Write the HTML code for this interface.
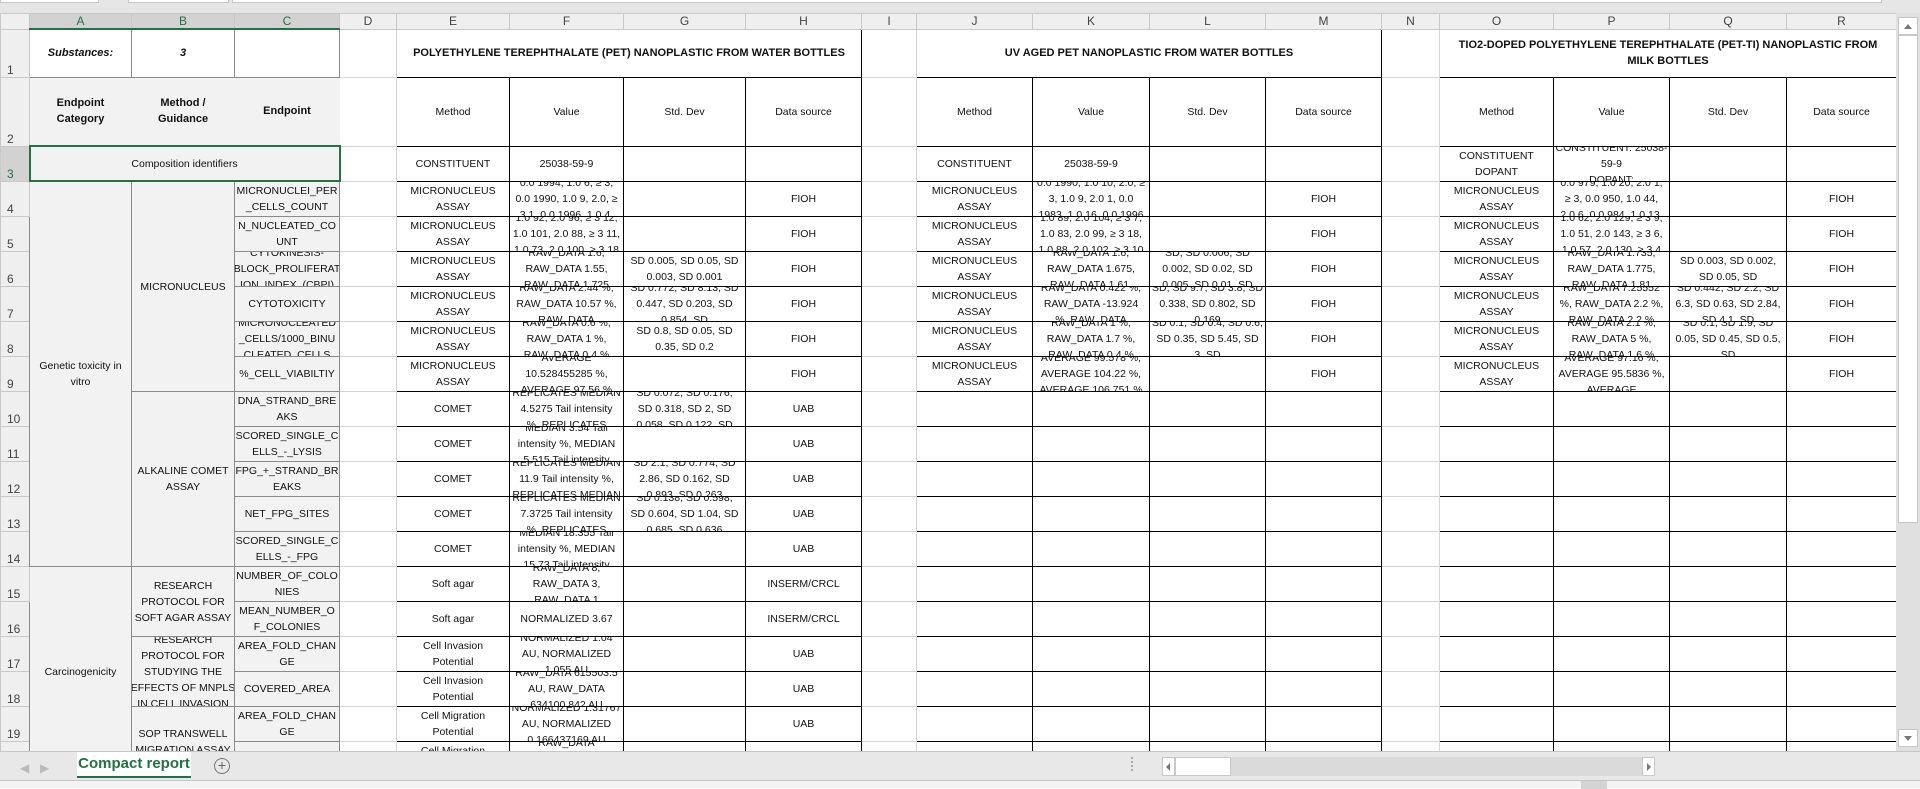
<!DOCTYPE html>
<html><head><meta charset="utf-8"><style>
*{margin:0;padding:0;box-sizing:border-box}
body{width:1920px;height:788px;overflow:hidden;background:#fff;font-family:"Liberation Sans",sans-serif;position:relative}
#top{position:absolute;left:0;top:0;width:1920px;height:14px;background:#e6e6e6;border-bottom:1px solid #c8c8c8}
#top div{position:absolute;top:0;height:3px;background:#fff;border:1px solid #c6c6c6;border-top:none}
#sheet{position:absolute;left:0;top:13px;width:1896px;height:738px;overflow:hidden}
table{border-collapse:collapse;table-layout:fixed;width:1896px}
td{border:1px solid #d4d4d4;padding:0;vertical-align:middle;text-align:center;font-size:10.5px;color:#111;overflow:hidden}
td>div{display:flex;align-items:center;justify-content:center;overflow:hidden;line-height:16px;white-space:nowrap}
tr.h td{height:15px;background:#efefef;color:#444;font-size:12px;border-color:#c8c8c8}
tr.h td.s{background:#d2d2d2;color:#217346;border-bottom:2px solid #217346}
td.rh{background:#efefef;color:#444;font-size:12px;text-align:left;vertical-align:bottom;padding-left:6px;border-color:#c8c8c8}
td.rh.s{background:#d2d2d2;color:#217346}
.g{background:#f2f2f2}
.gb{border:1px solid #8a8a8a}
.k{border:1px solid #000}
.b{font-weight:bold}
#tabs{position:absolute;left:0;top:751px;width:1920px;height:30px;background:#e8e8e8;border-top:1px solid #c6c6c6}
#status{position:absolute;left:0;top:780px;width:1920px;height:8px;background:#f3f3f3;border-top:1px solid #c6c6c6}
#vs{position:absolute;left:1896px;top:13px;width:24px;height:738px;background:#e0e0e0}
</style></head><body>
<div id="top"><div style="left:0;width:99px"></div><div style="left:128px;width:101px"></div><div style="left:232px;width:1650px"></div></div>
<div id="sheet"><table>
<colgroup><col style="width:29px"><col style="width:102px"><col style="width:103px"><col style="width:105px"><col style="width:57px"><col style="width:113px"><col style="width:114px"><col style="width:122px"><col style="width:116px"><col style="width:55px"><col style="width:116px"><col style="width:117px"><col style="width:116px"><col style="width:116px"><col style="width:58px"><col style="width:114px"><col style="width:116px"><col style="width:117px"><col style="width:110px"></colgroup>
<tr class="h"><td></td><td class="s">A</td><td class="s">B</td><td class="s">C</td><td>D</td><td>E</td><td>F</td><td>G</td><td>H</td><td>I</td><td>J</td><td>K</td><td>L</td><td>M</td><td>N</td><td>O</td><td>P</td><td>Q</td><td>R</td></tr>
<tr style="height:48px"><td class="rh">1</td><td class="gb b" style="font-style:italic;font-size:11px"><div>Substances:</div></td><td class="gb b" style="font-style:italic;font-size:11px"><div>3</div></td><td class="gb"></td><td></td><td colspan="4" class="k b" style="font-size:11px"><div>POLYETHYLENE TEREPHTHALATE (PET) NANOPLASTIC FROM WATER BOTTLES</div></td><td></td><td colspan="4" class="k b" style="font-size:11px"><div>UV AGED PET NANOPLASTIC FROM WATER BOTTLES</div></td><td></td><td colspan="4" class="k b" style="font-size:11px"><div>TIO2-DOPED POLYETHYLENE TEREPHTHALATE (PET-TI) NANOPLASTIC FROM<br>MILK BOTTLES</div></td></tr>
<tr style="height:69px"><td class="rh">2</td><td class="g b" style="border-color:#f2f2f2;font-size:11px"><div>Endpoint<br>Category</div></td><td class="g b" style="border-color:#f2f2f2;font-size:11px"><div>Method /<br>Guidance</div></td><td class="g b" style="border-color:#f2f2f2;font-size:11px"><div>Endpoint</div></td><td></td>
<td class="k"><div>Method</div></td><td class="k"><div>Value</div></td><td class="k"><div>Std. Dev</div></td><td class="k"><div>Data source</div></td><td></td>
<td class="k"><div>Method</div></td><td class="k"><div>Value</div></td><td class="k"><div>Std. Dev</div></td><td class="k"><div>Data source</div></td><td></td>
<td class="k"><div>Method</div></td><td class="k"><div>Value</div></td><td class="k"><div>Std. Dev</div></td><td class="k"><div>Data source</div></td></tr>
<tr style="height:35px"><td class="rh s">3</td><td colspan="3" class="g" style="border:2px solid #217346"><div>Composition identifiers</div></td><td></td>
<td class="k"><div>CONSTITUENT</div></td><td class="k"><div>25038-59-9</div></td><td class="k"></td><td class="k"></td><td></td>
<td class="k"><div>CONSTITUENT</div></td><td class="k"><div>25038-59-9</div></td><td class="k"></td><td class="k"></td><td></td>
<td class="k"><div style="height:34px">CONSTITUENT<br>DOPANT</div></td><td class="k"><div style="height:34px">CONSTITUENT: 25038-<br>59-9<br>DOPANT:</div></td><td class="k"></td><td class="k"></td></tr>

<tr style="height:35px"><td class="rh">4</td><td rowspan="11" class="g gb"><div>Genetic toxicity in<br>vitro</div></td><td rowspan="6" class="g gb"><div>MICRONUCLEUS</div></td><td class="g gb"><div style="height:34px">MICRONUCLEI_PER<br>_CELLS_COUNT</div></td><td></td>
<td class="k"><div>MICRONUCLEUS<br>ASSAY</div></td><td class="k"><div style="height:34px">0.0 1994, 1.0 6, ≥ 3,<br>0.0 1990, 1.0 9, 2.0, ≥<br>3 1, 0.0 1996, 1.0 4,</div></td><td class="k"></td><td class="k"><div>FIOH</div></td><td></td>
<td class="k"><div>MICRONUCLEUS<br>ASSAY</div></td><td class="k"><div style="height:34px">0.0 1990, 1.0 10, 2.0, ≥<br>3, 1.0 9, 2.0 1, 0.0<br>1983, 1.0 16, 0.0 1996</div></td><td class="k"></td><td class="k"><div>FIOH</div></td><td></td>
<td class="k"><div>MICRONUCLEUS<br>ASSAY</div></td><td class="k"><div style="height:34px">0.0 979, 1.0 20, 2.0 1,<br>≥ 3, 0.0 950, 1.0 44,<br>2.0 6, 0.0 984, 1.0 13,</div></td><td class="k"></td><td class="k"><div>FIOH</div></td></tr>

<tr style="height:35px"><td class="rh">5</td><td class="g gb"><div style="height:34px">N_NUCLEATED_CO<br>UNT</div></td><td></td>
<td class="k"><div>MICRONUCLEUS<br>ASSAY</div></td><td class="k"><div style="height:34px">1.0 92, 2.0 96, ≥ 3 12,<br>1.0 101, 2.0 88, ≥ 3 11,<br>1.0 73, 2.0 100, ≥ 3 18</div></td><td class="k"></td><td class="k"><div>FIOH</div></td><td></td>
<td class="k"><div>MICRONUCLEUS<br>ASSAY</div></td><td class="k"><div style="height:34px">1.0 89, 2.0 104, ≥ 3 7,<br>1.0 83, 2.0 99, ≥ 3 18,<br>1.0 88, 2.0 102, ≥ 3 10</div></td><td class="k"></td><td class="k"><div>FIOH</div></td><td></td>
<td class="k"><div>MICRONUCLEUS<br>ASSAY</div></td><td class="k"><div style="height:34px">1.0 62, 2.0 129, ≥ 3 9,<br>1.0 51, 2.0 143, ≥ 3 6,<br>1.0 57, 2.0 130, ≥ 3 4</div></td><td class="k"></td><td class="k"><div>FIOH</div></td></tr>

<tr style="height:35px"><td class="rh">6</td><td class="g gb"><div style="height:34px">CYTOKINESIS-<br>BLOCK_PROLIFERAT<br>ION_INDEX_(CBPI)</div></td><td></td>
<td class="k"><div>MICRONUCLEUS<br>ASSAY</div></td><td class="k"><div style="height:34px">RAW_DATA 1.6,<br>RAW_DATA 1.55,<br>RAW_DATA 1.725</div></td><td class="k"><div>SD 0.005, SD 0.05, SD<br>0.003, SD 0.001</div></td><td class="k"><div>FIOH</div></td><td></td>
<td class="k"><div>MICRONUCLEUS<br>ASSAY</div></td><td class="k"><div style="height:34px">RAW_DATA 1.6,<br>RAW_DATA 1.675,<br>RAW_DATA 1.61,</div></td><td class="k"><div style="height:34px">SD, SD 0.006, SD<br>0.002, SD 0.02, SD<br>0.005, SD 0.01, SD</div></td><td class="k"><div>FIOH</div></td><td></td>
<td class="k"><div>MICRONUCLEUS<br>ASSAY</div></td><td class="k"><div style="height:34px">RAW_DATA 1.735,<br>RAW_DATA 1.775,<br>RAW_DATA 1.81</div></td><td class="k"><div>SD 0.003, SD 0.002,<br>SD 0.05, SD</div></td><td class="k"><div>FIOH</div></td></tr>

<tr style="height:35px"><td class="rh">7</td><td class="g gb"><div>CYTOTOXICITY</div></td><td></td>
<td class="k"><div>MICRONUCLEUS<br>ASSAY</div></td><td class="k"><div style="height:34px">RAW_DATA 2.44 %,<br>RAW_DATA 10.57 %,<br>RAW_DATA</div></td><td class="k"><div style="height:34px">SD 0.772, SD 8.13, SD<br>0.447, SD 0.203, SD<br>0.854, SD</div></td><td class="k"><div>FIOH</div></td><td></td>
<td class="k"><div>MICRONUCLEUS<br>ASSAY</div></td><td class="k"><div style="height:34px">RAW_DATA 0.422 %,<br>RAW_DATA -13.924<br>%, RAW_DATA</div></td><td class="k"><div style="height:34px">SD, SD 9.7, SD 3.8, SD<br>0.338, SD 0.802, SD<br>0.169</div></td><td class="k"><div>FIOH</div></td><td></td>
<td class="k"><div>MICRONUCLEUS<br>ASSAY</div></td><td class="k"><div style="height:34px">RAW_DATA 7.25552<br>%, RAW_DATA 2.2 %,<br>RAW_DATA 2.2 %</div></td><td class="k"><div style="height:34px">SD 0.442, SD 2.2, SD<br>6.3, SD 0.63, SD 2.84,<br>SD 4.1, SD</div></td><td class="k"><div>FIOH</div></td></tr>

<tr style="height:35px"><td class="rh">8</td><td class="g gb"><div style="height:34px">MICRONUCLEATED<br>_CELLS/1000_BINU<br>CLEATED_CELLS</div></td><td></td>
<td class="k"><div>MICRONUCLEUS<br>ASSAY</div></td><td class="k"><div style="height:34px">RAW_DATA 0.6 %,<br>RAW_DATA 1 %,<br>RAW_DATA 0.4 %</div></td><td class="k"><div>SD 0.8, SD 0.05, SD<br>0.35, SD 0.2</div></td><td class="k"><div>FIOH</div></td><td></td>
<td class="k"><div>MICRONUCLEUS<br>ASSAY</div></td><td class="k"><div style="height:34px">RAW_DATA 1 %,<br>RAW_DATA 1.7 %,<br>RAW_DATA 0.4 %</div></td><td class="k"><div style="height:34px">SD 0.1, SD 0.4, SD 0.6,<br>SD 0.35, SD 5.45, SD<br>3, SD</div></td><td class="k"><div>FIOH</div></td><td></td>
<td class="k"><div>MICRONUCLEUS<br>ASSAY</div></td><td class="k"><div style="height:34px">RAW_DATA 2.1 %,<br>RAW_DATA 5 %,<br>RAW_DATA 1.6 %</div></td><td class="k"><div style="height:34px">SD 0.1, SD 1.9, SD<br>0.05, SD 0.45, SD 0.5,<br>SD</div></td><td class="k"><div>FIOH</div></td></tr>

<tr style="height:35px"><td class="rh">9</td><td class="g gb"><div>%_CELL_VIABILTIY</div></td><td></td>
<td class="k"><div>MICRONUCLEUS<br>ASSAY</div></td><td class="k"><div style="height:34px">AVERAGE<br>10.528455285 %,<br>AVERAGE 97.56 %</div></td><td class="k"></td><td class="k"><div>FIOH</div></td><td></td>
<td class="k"><div>MICRONUCLEUS<br>ASSAY</div></td><td class="k"><div style="height:34px">AVERAGE 99.578 %,<br>AVERAGE 104.22 %,<br>AVERAGE 106.751 %</div></td><td class="k"></td><td class="k"><div>FIOH</div></td><td></td>
<td class="k"><div>MICRONUCLEUS<br>ASSAY</div></td><td class="k"><div style="height:34px">AVERAGE 97.16 %,<br>AVERAGE 95.5836 %,<br>AVERAGE</div></td><td class="k"></td><td class="k"><div>FIOH</div></td></tr>

<tr style="height:35px"><td class="rh">10</td><td rowspan="5" class="g gb"><div>ALKALINE COMET<br>ASSAY</div></td><td class="g gb"><div>DNA_STRAND_BRE<br>AKS</div></td><td></td>
<td class="k"><div>COMET</div></td><td class="k"><div style="height:34px">REPLICATES MEDIAN<br>4.5275 Tail intensity<br>%, REPLICATES</div></td><td class="k"><div style="height:34px">SD 0.072, SD 0.176,<br>SD 0.318, SD 2, SD<br>0.058, SD 0.122, SD</div></td><td class="k"><div>UAB</div></td><td></td>
<td class="k"></td><td class="k"></td><td class="k"></td><td class="k"></td><td></td><td class="k"></td><td class="k"></td><td class="k"></td><td class="k"></td></tr>

<tr style="height:35px"><td class="rh">11</td><td class="g gb"><div>SCORED_SINGLE_C<br>ELLS_-_LYSIS</div></td><td></td>
<td class="k"><div>COMET</div></td><td class="k"><div style="height:34px">MEDIAN 3.54 Tail<br>intensity %, MEDIAN<br>5.515 Tail intensity</div></td><td class="k"></td><td class="k"><div>UAB</div></td><td></td>
<td class="k"></td><td class="k"></td><td class="k"></td><td class="k"></td><td></td><td class="k"></td><td class="k"></td><td class="k"></td><td class="k"></td></tr>

<tr style="height:35px"><td class="rh">12</td><td class="g gb"><div>FPG_+_STRAND_BR<br>EAKS</div></td><td></td>
<td class="k"><div>COMET</div></td><td class="k"><div style="height:34px">REPLICATES MEDIAN<br>11.9 Tail intensity %,<br>REPLICATES MEDIAN</div></td><td class="k"><div style="height:34px">SD 2.1, SD 0.774, SD<br>2.86, SD 0.162, SD<br>0.893, SD 0.263</div></td><td class="k"><div>UAB</div></td><td></td>
<td class="k"></td><td class="k"></td><td class="k"></td><td class="k"></td><td></td><td class="k"></td><td class="k"></td><td class="k"></td><td class="k"></td></tr>

<tr style="height:35px"><td class="rh">13</td><td class="g gb"><div>NET_FPG_SITES</div></td><td></td>
<td class="k"><div>COMET</div></td><td class="k"><div style="height:34px">REPLICATES MEDIAN<br>7.3725 Tail intensity<br>%, REPLICATES</div></td><td class="k"><div style="height:34px">SD 0.138, SD 0.598,<br>SD 0.604, SD 1.04, SD<br>0.685, SD 0.636</div></td><td class="k"><div>UAB</div></td><td></td>
<td class="k"></td><td class="k"></td><td class="k"></td><td class="k"></td><td></td><td class="k"></td><td class="k"></td><td class="k"></td><td class="k"></td></tr>

<tr style="height:35px"><td class="rh">14</td><td class="g gb"><div>SCORED_SINGLE_C<br>ELLS_-_FPG</div></td><td></td>
<td class="k"><div>COMET</div></td><td class="k"><div style="height:34px">MEDIAN 18.355 Tail<br>intensity %, MEDIAN<br>15.73 Tail intensity</div></td><td class="k"></td><td class="k"><div>UAB</div></td><td></td>
<td class="k"></td><td class="k"></td><td class="k"></td><td class="k"></td><td></td><td class="k"></td><td class="k"></td><td class="k"></td><td class="k"></td></tr>

<tr style="height:35px"><td class="rh">15</td><td rowspan="6" class="g gb"><div>Carcinogenicity</div></td><td rowspan="2" class="g gb"><div>RESEARCH<br>PROTOCOL FOR<br>SOFT AGAR ASSAY</div></td><td class="g gb"><div>NUMBER_OF_COLO<br>NIES</div></td><td></td>
<td class="k"><div>Soft agar</div></td><td class="k"><div style="height:34px">RAW_DATA 8,<br>RAW_DATA 3,<br>RAW_DATA 1</div></td><td class="k"></td><td class="k"><div>INSERM/CRCL</div></td><td></td>
<td class="k"></td><td class="k"></td><td class="k"></td><td class="k"></td><td></td><td class="k"></td><td class="k"></td><td class="k"></td><td class="k"></td></tr>

<tr style="height:35px"><td class="rh">16</td><td class="g gb"><div>MEAN_NUMBER_O<br>F_COLONIES</div></td><td></td>
<td class="k"><div>Soft agar</div></td><td class="k"><div>NORMALIZED 3.67</div></td><td class="k"></td><td class="k"><div>INSERM/CRCL</div></td><td></td>
<td class="k"></td><td class="k"></td><td class="k"></td><td class="k"></td><td></td><td class="k"></td><td class="k"></td><td class="k"></td><td class="k"></td></tr>

<tr style="height:35px"><td class="rh">17</td><td rowspan="2" class="g gb"><div style="height:69px">RESEARCH<br>PROTOCOL FOR<br>STUDYING THE<br>EFFECTS OF MNPLS<br>IN CELL INVASION</div></td><td class="g gb"><div>AREA_FOLD_CHAN<br>GE</div></td><td></td>
<td class="k"><div>Cell Invasion<br>Potential</div></td><td class="k"><div style="height:34px">NORMALIZED 1.04<br>AU, NORMALIZED<br>1.055 AU</div></td><td class="k"></td><td class="k"><div>UAB</div></td><td></td>
<td class="k"></td><td class="k"></td><td class="k"></td><td class="k"></td><td></td><td class="k"></td><td class="k"></td><td class="k"></td><td class="k"></td></tr>

<tr style="height:35px"><td class="rh">18</td><td class="g gb"><div>COVERED_AREA</div></td><td></td>
<td class="k"><div>Cell Invasion<br>Potential</div></td><td class="k"><div style="height:34px">RAW_DATA 615503.5<br>AU, RAW_DATA<br>634100.842 AU</div></td><td class="k"></td><td class="k"><div>UAB</div></td><td></td>
<td class="k"></td><td class="k"></td><td class="k"></td><td class="k"></td><td></td><td class="k"></td><td class="k"></td><td class="k"></td><td class="k"></td></tr>

<tr style="height:35px"><td class="rh">19</td><td rowspan="2" class="g gb"><div>SOP TRANSWELL<br>MIGRATION ASSAY</div></td><td class="g gb"><div>AREA_FOLD_CHAN<br>GE</div></td><td></td>
<td class="k"><div>Cell Migration<br>Potential</div></td><td class="k"><div style="height:34px">NORMALIZED 1.31767<br>AU, NORMALIZED<br>0.166437169 AU</div></td><td class="k"></td><td class="k"><div>UAB</div></td><td></td>
<td class="k"></td><td class="k"></td><td class="k"></td><td class="k"></td><td></td><td class="k"></td><td class="k"></td><td class="k"></td><td class="k"></td></tr>

<tr style="height:35px"><td class="rh">20</td><td class="g gb"><div>COVERED_AREA</div></td><td></td>
<td class="k"><div>Cell Migration<br>Potential</div></td><td class="k"><div style="height:34px">RAW_DATA<br>AU, RAW_DATA<br>AU</div></td><td class="k"></td><td class="k"><div>UAB</div></td><td></td>
<td class="k"></td><td class="k"></td><td class="k"></td><td class="k"></td><td></td><td class="k"></td><td class="k"></td><td class="k"></td><td class="k"></td></tr>
</table></div>

<div id="vs">
<div style="position:absolute;left:2px;top:4px;width:20px;height:18px;background:#fff;border:1px solid #c8c8c8"><div style="position:absolute;left:5px;top:6px;border-left:4px solid transparent;border-right:4px solid transparent;border-bottom:5px solid #777"></div></div>
<div style="position:absolute;left:2px;top:22px;width:20px;height:488px;background:#fff;border:1px solid #c8c8c8"></div>
<div style="position:absolute;left:2px;top:716px;width:20px;height:18px;background:#fff;border:1px solid #c8c8c8"><div style="position:absolute;left:5px;top:6px;border-left:4px solid transparent;border-right:4px solid transparent;border-top:5px solid #777"></div></div>
</div>

<div id="tabs">
<div style="position:absolute;left:20px;top:9px;color:#bbb;font-size:12px">&#9664;</div>
<div style="position:absolute;left:40px;top:9px;color:#bbb;font-size:12px">&#9654;</div>
<div style="position:absolute;left:77px;top:0;width:114px;height:26px;background:#fff;border-bottom:2px solid #217346;color:#217346;font-weight:bold;font-size:15px;text-align:center;line-height:24px;white-space:nowrap;overflow:hidden">Compact report</div>
<div style="position:absolute;left:214px;top:6px;width:16px;height:16px;border:1px solid #777;border-radius:50%;color:#666;font-size:14px;line-height:13px;text-align:center">+</div>
<div style="position:absolute;left:1131px;top:5px;width:2px;height:14px;border-left:2px dotted #aaa"></div>
<div style="position:absolute;left:1162px;top:5px;width:493px;height:19px;background:#dadada"></div>
<div style="position:absolute;left:1162px;top:5px;width:13px;height:19px;background:#fff;border:1px solid #c8c8c8"><div style="position:absolute;left:3px;top:5px;border-top:4px solid transparent;border-bottom:4px solid transparent;border-right:4px solid #777"></div></div>
<div style="position:absolute;left:1175px;top:5px;width:56px;height:19px;background:#fff;border:1px solid #c8c8c8"></div>
<div style="position:absolute;left:1642px;top:5px;width:13px;height:19px;background:#fff;border:1px solid #c8c8c8"><div style="position:absolute;left:4px;top:5px;border-top:4px solid transparent;border-bottom:4px solid transparent;border-left:4px solid #777"></div></div>
</div>
<div id="status"><div style="position:absolute;left:1581px;top:0;width:26px;height:8px;background:#d4d4d4"></div></div>
</body></html>
